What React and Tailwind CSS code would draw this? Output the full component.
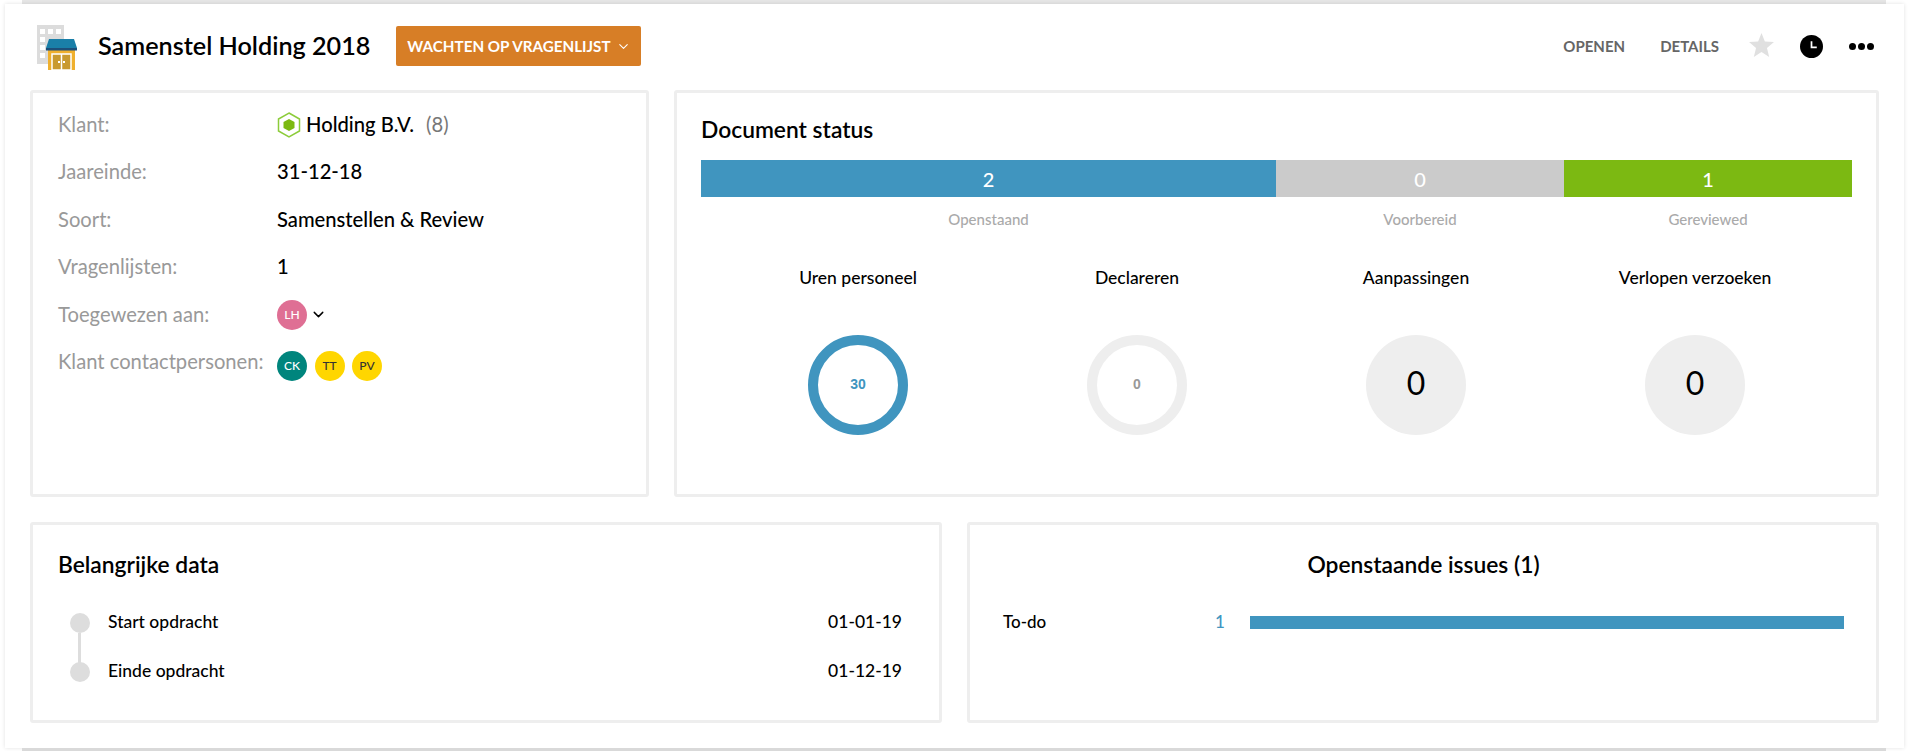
import React from 'react';
import { ChevronDown } from 'lucide-react';

const BLUE = '#4095bf';

const ShopLogo = () => (
  <svg width="44" height="46" viewBox="0 0 44 46" className="shrink-0">
    {/* building behind the shop */}
    <path fill="#dcdcdc" d="M1 0h27v14H13v25H1z" />
    <g fill="#fff">
      <rect x="4" y="4" width="5" height="5" />
      <rect x="12" y="4" width="5" height="5" />
      <rect x="20" y="4" width="5" height="5" />
      <rect x="4" y="12" width="5" height="5" />
      <rect x="4" y="20" width="5" height="5" />
      <rect x="4" y="28" width="5" height="5" />
    </g>
    {/* shop */}
    <rect x="12" y="24" width="27" height="21" fill="#efb02e" />
    <path fill="#1a7fa8" d="M13 14h25l3 9H10z" />
    <path fill="#1d4f7a" d="M10 23h31v2.5H10z" />
    <rect x="16" y="29" width="19" height="16" fill="#c99a2f" stroke="#fff" strokeWidth="1.5" />
    <path d="M25.5 29v16" stroke="#fff" strokeWidth="1.5" />
    <rect x="22" y="36" width="2" height="2" fill="#fff" />
    <rect x="27" y="36" width="2" height="2" fill="#fff" />
  </svg>
);

const Hexagon = () => (
  <svg width="24" height="26" viewBox="0 0 24 26" className="mt-[2px]">
    <path d="M12 1l10.500 6v12L12 25 1.500 19V7z" fill="#fff" stroke="#8ccc3a" strokeWidth="1.5" />
    <path d="M12 7l5.500 3v6L12 19l-5.500-3v-6z" fill="#7cb912" />
  </svg>
);

const ClockIcon = () => (
  <svg width="23" height="23" viewBox="0 0 24 24">
    <circle cx="12" cy="12" r="12" fill="#000" />
    <path d="M12 6.500V13h5.500" fill="none" stroke="#fff" strokeWidth="1.800" />
  </svg>
);

const StarIcon = () => (
  <svg width="25" height="24" viewBox="0 0 26 25" className="mb-[2px]">
    <path d="M13 0l3.500 8.800 9.500.7-7.300 6.100 2.300 9.400L13 19.900 5 25l2.300-9.400L0 9.500l9.500-.7z" fill="#e0e0e0" />
  </svg>
);

const Avatar = ({ initials, bg, text }) => (
  <div className={`w-[30px] h-[30px] rounded-full flex items-center justify-center text-[12px] ${bg} ${text}`}>
    {initials}
  </div>
);

const Row = ({ label, children }) => (
  <div className="flex items-center h-[47.5px]">
    <div className="w-[219px] shrink-0 text-[20.2px] text-[#999999]">{label}</div>
    <div className="flex items-center text-[20.2px] font-medium text-black">{children}</div>
  </div>
);

const Panel = ({ className, children }) => (
  <div className={`border-[3px] border-[#eeeeee] rounded-[3px] bg-white ${className}`}>{children}</div>
);

const StatusSegment = ({ value, label, color, grow }) => (
  <div className={`flex flex-col ${grow}`}>
    <div className={`h-[37px] flex items-center justify-center text-white text-[20px] font-medium ${color}`}>{value}</div>
    <div className="mt-[13px] text-center text-[15px] font-medium text-[#aaaaaa] leading-[18px]">{label}</div>
  </div>
);

const Gauge = ({ title, children }) => (
  <div className="flex flex-col items-center">
    <div className="text-[17.5px] font-medium text-black leading-[20px]">{title}</div>
    <div className="mt-[47px]">{children}</div>
  </div>
);

const Ring = ({ value, border, text }) => (
  <div className={`w-[100px] h-[100px] rounded-full border-[10px] flex items-center justify-center pb-[2px] text-[14px] font-bold font-['Liberation_Sans',sans-serif] ${border} ${text}`}>
    {value}
  </div>
);

const Disc = ({ value }) => (
  <div className="w-[100px] h-[100px] rounded-full bg-[#eeeeee] flex items-center justify-center pb-[4px] text-[32px] text-black">
    {value}
  </div>
);

const DateRow = ({ label, date, line }) => (
  <div className="flex items-center h-[49px]">
    <div className="relative w-[20px] h-[20px] ml-[12px] rounded-full bg-[#dddddd] shrink-0">
      {line && <div className="absolute left-[8px] top-[20px] w-[3px] h-[30px] bg-[#dddddd]" />}
    </div>
    <div className="ml-[18px] text-[17.5px] font-medium text-black">{label}</div>
    <div className="ml-auto text-[17.5px] font-medium text-black">{date}</div>
  </div>
);

export default function App() {
  return (
    <div className="h-[751px] bg-white overflow-hidden font-['Lato','Noto_Sans',sans-serif]">
      <div className="h-[4px] ml-[22px] mr-[24px] bg-[#e6e6e6]" />

      <div className="h-[744px] ml-[5px] mr-[6px] px-[25px] bg-white shadow-[0_0_4px_rgba(0,0,0,0.12)]">
        {/* Header */}
        <div className="h-[84px] mb-[2px] flex items-center">
          <div className="ml-[6px] mt-[3px]"><ShopLogo /></div>
          <h1 className="ml-[18px] mb-[1px] text-[25.2px] font-semibold text-black">Samenstel Holding 2018</h1>
          <button className="ml-[26px] w-[245px] h-[40px] flex items-center justify-center gap-[5px] bg-[#d77e26] rounded-[2px] text-white text-[15.2px] font-bold">
            WACHTEN OP VRAGENLIJST
            <ChevronDown size={15} strokeWidth={1.75} />
          </button>
          <div className="ml-auto flex items-center mr-[5px] text-[15px] font-bold text-[#666666]">
            <span>OPENEN</span>
            <span className="ml-[35px]">DETAILS</span>
            <span className="ml-[30px]"><StarIcon /></span>
            <span className="ml-[26px]"><ClockIcon /></span>
            <span className="ml-[26px] flex gap-[2px]">
              <i className="w-[7px] h-[7px] rounded-full bg-black" />
              <i className="w-[7px] h-[7px] rounded-full bg-black" />
              <i className="w-[7px] h-[7px] rounded-full bg-black" />
            </span>
          </div>
        </div>

        {/* Top panels */}
        <div className="flex gap-[25px] h-[407px]">
          <Panel className="w-[619px] pt-[7px] pl-[25px]">
            <Row label="Klant:">
              <Hexagon />
              <span className="ml-[5px]">Holding B.V.</span>
              <span className="ml-[12px] font-normal text-[#777777]">(8)</span>
            </Row>
            <Row label="Jaareinde:">31-12-18</Row>
            <Row label="Soort:">Samenstellen &amp; Review</Row>
            <Row label="Vragenlijsten:">1</Row>
            <Row label="Toegewezen aan:">
              <div className="flex items-center mt-[2px]">
                <Avatar initials="LH" bg="bg-[#df6f94]" text="text-white" />
                <ChevronDown size={17} strokeWidth={2} className="ml-[3px] text-black" />
              </div>
            </Row>
            <Row label="Klant contactpersonen:">
              <div className="flex gap-[7.5px] mt-[10px]">
                <Avatar initials="CK" bg="bg-[#00857d]" text="text-white" />
                <Avatar initials="TT" bg="bg-[#ffd600]" text="text-[#333333]" />
                <Avatar initials="PV" bg="bg-[#ffd600]" text="text-[#333333]" />
              </div>
            </Row>
          </Panel>

          <Panel className="flex-1 px-[24px] pt-[23px]">
            <h2 className="text-[22.8px] font-semibold text-black leading-[26px]">Document status</h2>
            <div className="mt-[18px] flex">
              <StatusSegment value="2" label="Openstaand" color="bg-[#4095bf]" grow="w-[575px]" />
              <StatusSegment value="0" label="Voorbereid" color="bg-[#cbcbcb]" grow="w-[288px]" />
              <StatusSegment value="1" label="Gereviewed" color="bg-[#7cb912]" grow="w-[288px]" />
            </div>
            <div className="mt-[40px] mx-[17.5px] grid grid-cols-4">
              <Gauge title="Uren personeel"><Ring value="30" border="border-[#4095bf]" text="text-[#4095bf]" /></Gauge>
              <Gauge title="Declareren"><Ring value="0" border="border-[#eeeeee]" text="text-[#999999]" /></Gauge>
              <Gauge title="Aanpassingen"><Disc value="0" /></Gauge>
              <Gauge title="Verlopen verzoeken"><Disc value="0" /></Gauge>
            </div>
          </Panel>
        </div>

        {/* Bottom panels */}
        <div className="flex gap-[25px] h-[201px] mt-[25px]">
          <Panel className="w-[912px] pl-[25px] pr-[37px] pt-[26px]">
            <h2 className="text-[22.8px] font-semibold text-black leading-[26px] mb-[21px]">Belangrijke data</h2>
            <DateRow label="Start opdracht" date="01-01-19" line />
            <DateRow label="Einde opdracht" date="01-12-19" />
          </Panel>

          <Panel className="w-[912px] pl-[33px] pr-[32px] pt-[26px]">
            <h2 className="text-center text-[22.8px] font-semibold text-black leading-[26px]">Openstaande issues (1)</h2>
            <div className="mt-[35px] flex items-center h-[20px]">
              <div className="w-[212px] text-[17px] font-medium text-black">To-do</div>
              <div className="w-[35px] text-[17px] font-medium text-[#4095bf]">1</div>
              <div className="flex-1 h-[13px]" style={{ backgroundColor: BLUE }} />
            </div>
          </Panel>
        </div>
      </div>

      <div className="h-[3px] ml-[22px] mr-[24px] bg-[#d9d9d9]" />
    </div>
  );
}
